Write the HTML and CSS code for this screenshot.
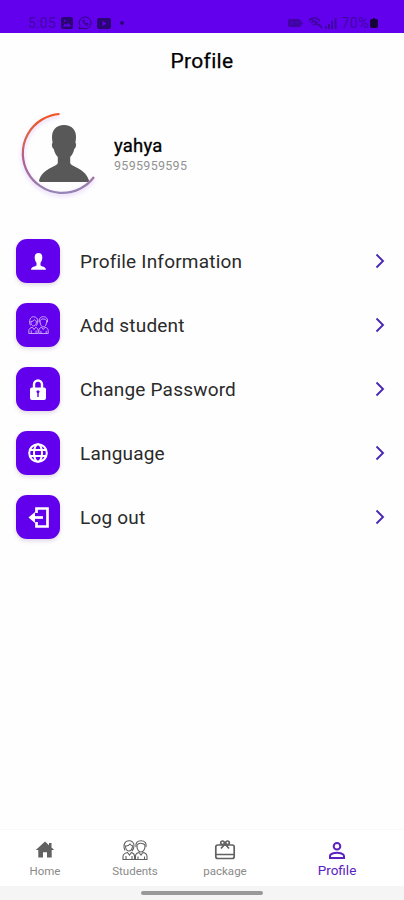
FILE: index.html
```html
<!DOCTYPE html>
<html lang="en">
<head>
    <meta charset="UTF-8" />
    <meta name="viewport" content="width=device-width, initial-scale=1" />
    <title>Profile</title>
    <link rel="stylesheet" href="styles.css">
</head>
<body>
    <!-- Shared icons -->
    <svg class="sprite" aria-hidden="true">
        <symbol id="chevron" viewBox="0 0 10 16">
            <path d="M1.500 1.500L8 8l-6.500 6.500" fill="none" stroke="currentColor" stroke-width="1.900" />
        </symbol>
        <symbol id="person" viewBox="0 0 50 57">
            <path d="M25 0c-8 0-12 5-12 12 0 2 .3 4 .6 6-1.300.5-.7 5 1.200 6 .8 4 2.200 6 4 8v6C17.800 42 3.800 43 0 55.500Q0 57 2 57h46q2 0 2-1.500C46.200 43 32.200 42 31.200 38v-6c1.800-2 3.200-4 4-8 1.900-1 2.500-5.500 1.200-6 .3-2 .6-4 .6-6C37 5 33 0 25 0z" fill="currentColor" />
        </symbol>
        <symbol id="students" viewBox="0 0 26 20" preserveAspectRatio="none">
            <g fill="none" stroke="currentColor" stroke-width="1.100">
                <path d="M3 10.500C.5 5 3 .8 7 .8c3 0 5 2 5 4.700 0 2-.5 4-2 5.500" />
                <path d="M3.500 6c2 .3 3.500-.6 4.500-2 .6 1 1.500 1.600 2.500 1.800C10.500 9 9 11 7 11S3.500 9 3.500 6z" />
                <path d="M1 19.500v-3c0-2.500 2-3.500 4.500-4L7.500 15l2-2.500c1.500.5 3 1.500 3 3.500v3.500H1zM4 16v3.500M10 16v3.500" />
                <path d="M14 7c-1-4 1.500-6.200 5-6.200S25 3 24 7" />
                <path d="M15 5c1.500-2 5.500-2.500 8 0 .3 4-1.500 7-4 7s-4.300-3-4-7z" />
                <path d="M13.500 19.500V16c0-2 1.500-3 3.500-3.500l2 2.500 2-2.500c2.500.5 4 1.500 4 4v3H13.500zM16 16.500v3M22.500 16.500v3" />
            </g>
        </symbol>
    </svg>

    <header class="status-bar">
        <div class="status-left">
            <span class="status-time">5:05</span>
            <svg width="12" height="12" viewBox="0 0 12 12"><path fill-rule="evenodd" d="M2 0h8q2 0 2 2v8q0 2-2 2H2q-2 0-2-2V2Q0 0 2 0zm0 9.500h8L7.500 6 5.500 8 4 6.500zM3 3v1.500h1.500V3z" fill="currentColor" /></svg>
            <svg width="14" height="14" viewBox="0 0 14 14" fill="none" stroke="currentColor"><path d="M1 13l1-3.300A5.900 5.900 0 1 1 4.300 12z" /><path d="M5 4.200c-.8 2 2.500 5.600 4.800 5l.3-1.400-1.500-.6-.8.700c-.8-.3-1.400-1-1.800-1.800l.5-.7L6 4.200z" /></svg>
            <svg width="14" height="11" viewBox="0 0 14 11"><path fill-rule="evenodd" d="M2 0h10q2 0 2 2v7q0 2-2 2H2q-2 0-2-2V2Q0 0 2 0zm3.500 3v5l4-2.500z" fill="currentColor" /></svg>
            <span class="status-dot"></span>
        </div>
        <div class="status-right">
            <svg width="15" height="8" viewBox="0 0 15 8"><path d="M2 0h9l4 4-3 4H2Q0 8 0 6V2q0-2 2-2z" fill="currentColor" /><path d="M3 3h2v2H3zM7 3h4" stroke="#6200ee" stroke-width=".4" fill="none" /></svg>
            <svg class="wifi" width="15" height="12" viewBox="0 0 15 12" fill="none" stroke="currentColor" stroke-width="1.500"><path d="M1 4c3-4 8-4 11 0M3 6c2-2.500 5-2.500 7 0M5 8c1-1 2.500-1 3.500 0M2 1l12 10M11 7l3 4" /></svg>
            <svg width="12" height="11" viewBox="0 0 12 11" fill="currentColor"><path d="M0 8h2v3H0zM3 6h2v5H3zM6 3h2v8H6zM9.500 0h2v11h-2z" /></svg>
            <span class="status-battery">70%</span>
            <svg class="battery" width="8" height="10" viewBox="0 0 8 10"><path d="M3 0h2v1h1q2 0 2 2v5q0 2-2 2H2q-2 0-2-2V3q0-2 2-2h1z" fill="currentColor" /></svg>
        </div>
    </header>

    <main class="content">
        <h1>Profile</h1>

        <section class="user">
            <div class="avatar">
                <svg class="avatar-ring" width="84" height="84" viewBox="0 0 84 84">
                    <defs>
                        <linearGradient id="ring" x1="0" y1="0" x2="0" y2="1">
                            <stop offset="0" stop-color="#f4511e" />
                            <stop offset=".3" stop-color="#d9644c" />
                            <stop offset=".6" stop-color="#ad6090" />
                            <stop offset="1" stop-color="#9585b5" />
                        </linearGradient>
                    </defs>
                    <path d="M40.500 3A39.500 39.500 0 1 0 75 66" fill="none" stroke="url(#ring)" stroke-width="2.200" />
                </svg>
                <svg class="avatar-person" width="50" height="57"><use href="#person" /></svg>
            </div>
            <div class="user-text">
                <h2>yahya</h2>
                <p>9595959595</p>
            </div>
        </section>

        <ul class="menu">
            <li class="menu-item">
                <span class="tile"><svg width="17" height="17" viewBox="0 0 17 17"><path d="M8.500 0C5.700 0 4.700 2 4.700 4.500c0 2.300.7 4 1.800 5.200v2.800C5.500 13.600 1 13.500 1 16.800h15c0-3.300-4.500-3.200-5.500-4.300V9.700c1.100-1.200 1.800-2.900 1.800-5.200C12.300 2 11.300 0 8.500 0z" fill="currentColor" /></svg></span>
                <span class="menu-label">Profile Information</span>
                <svg class="chevron" width="10" height="16"><use href="#chevron" /></svg>
            </li>
            <li class="menu-item">
                <span class="tile tile-students"><svg width="21" height="18"><use href="#students" /></svg></span>
                <span class="menu-label">Add student</span>
                <svg class="chevron" width="10" height="16"><use href="#chevron" /></svg>
            </li>
            <li class="menu-item">
                <span class="tile"><svg width="16" height="21" viewBox="0 0 16 21"><path d="M4 9V5.500a4 4 0 0 1 8 0V9" fill="none" stroke="currentColor" stroke-width="2.400" /><path fill-rule="evenodd" d="M2 8.500h12q2 0 2 2V19q0 2-2 2H2q-2 0-2-2v-8.500q0-2 2-2zM6.300 12.800l1 1.400V18h1.400v-3.800l1-1.400-.7-1.300H7z" fill="currentColor" /></svg></span>
                <span class="menu-label">Change Password</span>
                <svg class="chevron" width="10" height="16"><use href="#chevron" /></svg>
            </li>
            <li class="menu-item">
                <span class="tile"><svg width="20" height="20" viewBox="0 0 20 20" fill="none" stroke="currentColor" stroke-width="2"><circle cx="10" cy="10" r="8.800" /><ellipse cx="10" cy="10" rx="4" ry="8.800" /><path d="M1.500 7h17M1.500 13h17" /></svg></span>
                <span class="menu-label">Language</span>
                <svg class="chevron" width="10" height="16"><use href="#chevron" /></svg>
            </li>
            <li class="menu-item">
                <span class="tile"><svg width="21" height="21" viewBox="0 0 21 21" fill="none" stroke="currentColor" stroke-width="2.700"><path d="M8.500 6V1.500h11v18h-11V15" /><path d="M15 10.500H3" /><path d="M7 5v11L.5 10.500z" fill="currentColor" stroke="none" /></svg></span>
                <span class="menu-label">Log out</span>
                <svg class="chevron" width="10" height="16"><use href="#chevron" /></svg>
            </li>
        </ul>
    </main>

    <nav class="bottom-nav">
        <a class="nav-item">
            <svg width="20" height="20" viewBox="0 0 20 20"><path d="M10 1.500L.8 10h2.500v7.500H8v-5.300h4v5.300h4.700V10h2.500L16.500 7.500V3H14v2.200z" fill="currentColor" /></svg>
            <span>Home</span>
        </a>
        <a class="nav-item">
            <svg width="26" height="20"><use href="#students" /></svg>
            <span>Students</span>
        </a>
        <a class="nav-item">
            <svg width="22" height="20" viewBox="0 0 22 20" fill="none" stroke="currentColor" stroke-width="1.700"><rect x="1.800" y="5" width="18.400" height="13.500" rx="2" /><path d="M2 14.500h18M7 8.500l4-4.500 4 4.500" /><circle cx="8.500" cy="2.800" r="1.800" /><circle cx="13.500" cy="2.800" r="1.800" /></svg>
            <span>package</span>
        </a>
        <a class="nav-item active">
            <svg width="18" height="18" viewBox="0 0 18 18" fill="none" stroke="currentColor" stroke-width="2"><circle cx="9" cy="4.300" r="3.300" /><path d="M2 16v-2c0-2.300 4.500-3.300 7-3.300s7 1 7 3.300v2z" /></svg>
            <span>Profile</span>
        </a>
    </nav>
    <div class="gesture-area"><span class="gesture-bar"></span></div>
</body>
</html>
```

FILE: styles.css
```css
:root {
    --primary: #6200ee;
    --status-text: #4004a3;
    --active: #5b21c0;
    --chevron: #4a27b4;
    --gray: #616161;
    --text-color: #2a2a2a;
}

* {
    box-sizing: border-box;
    margin: 0;
    padding: 0;
}

body {
    font-family: Roboto, 'Liberation Sans', sans-serif;
    background: #fefefe;
    color: var(--text-color);
    height: 100vh;
    display: flex;
    flex-direction: column;
    overflow: hidden;
}

svg {
    display: block;
    flex-shrink: 0;
}

.sprite {
    position: absolute;
    width: 0;
    height: 0;
}

/* Status bar */
.status-bar {
    height: 33px;
    flex-shrink: 0;
    background: var(--primary);
    color: var(--status-text);
    display: flex;
    justify-content: space-between;
    padding: 13px 26px 0 28px;
}

.status-left,
.status-right {
    display: flex;
    align-items: center;
    height: 20px;
    font-size: 14px;
}

.status-left {
    gap: 5px;
    color: #2c0575;
}

.status-time {
    width: 28px;
    letter-spacing: 0.3px;
    color: var(--status-text);
}

.status-dot {
    width: 4px;
    height: 4px;
    margin-left: 4px;
    border-radius: 50%;
    background: currentColor;
}

.status-right {
    gap: 5px;
}

.status-battery {
    letter-spacing: 0.5px;
}

.wifi {
    margin-right: -3px;
}

.battery {
    margin-left: -4px;
    color: #170339;
}

/* Content */
.content {
    flex: 1;
}

h1 {
    height: 54px;
    line-height: 56px;
    text-align: center;
    font-size: 21px;
    font-weight: 400;
    letter-spacing: 0.3px;
    color: #000;
    -webkit-text-stroke: 0.25px #000;
}

.user {
    display: flex;
    align-items: center;
    gap: 11px;
    height: 84px;
    margin: 24px 19px 0;
}

.avatar {
    position: relative;
    width: 84px;
    height: 84px;
}

.avatar-ring {
    filter: drop-shadow(0 2px 2px rgba(150, 80, 240, 0.3));
}

.avatar-person {
    position: absolute;
    left: 20px;
    top: 14px;
    color: #585858;
}

.user-text {
    padding-top: 4px;
}

h2 {
    font-size: 18.5px;
    line-height: 21px;
    font-weight: 400;
    letter-spacing: 0.2px;
    color: #000;
    -webkit-text-stroke: 0.3px #000;
}

.user-text p {
    font-size: 12.5px;
    line-height: 17px;
    letter-spacing: 0.3px;
    color: #929292;
}

.menu {
    list-style: none;
    margin-top: 44px;
    display: flex;
    flex-direction: column;
    gap: 20px;
    padding: 0 19px 0 16px;
}

.menu-item {
    display: flex;
    align-items: center;
    height: 44px;
}

.tile {
    width: 44px;
    height: 44px;
    border-radius: 11px;
    background: var(--primary);
    color: #fff;
    display: flex;
    align-items: center;
    justify-content: center;
    box-shadow: 0 2px 4px rgba(60, 0, 100, 0.16);
}

.tile-students {
    color: #cfb2fa;
}

.menu-label {
    flex: 1;
    margin-left: 20px;
    font-size: 19px;
    letter-spacing: 0.2px;
}

.chevron {
    color: var(--chevron);
}

/* Bottom navigation */
.bottom-nav {
    display: flex;
    height: 57px;
    border-top: 1px solid #f8f8f8;
    background: #fff;
}

.nav-item {
    width: 90px;
    padding-top: 10px;
    display: flex;
    flex-direction: column;
    align-items: center;
    gap: 4px;
    font-size: 11.5px;
    line-height: 14px;
    color: #8a8a8a;
}

.nav-item svg {
    color: var(--gray);
}

.nav-item.active {
    flex: 1;
    padding-top: 12px;
    gap: 3px;
    font-size: 13.5px;
    color: var(--active);
}

.nav-item.active svg {
    color: var(--active);
}

.gesture-area {
    height: 14px;
    background: #f5f5f5;
    display: flex;
    justify-content: center;
    padding-top: 5px;
}

.gesture-bar {
    width: 122px;
    height: 4px;
    border-radius: 2px;
    background: #999;
}
```
